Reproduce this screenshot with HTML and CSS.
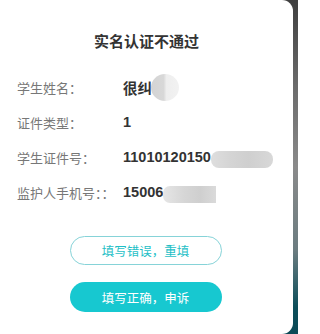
FILE: index.html
```html
<!DOCTYPE html>
<html lang="zh">
<head>
<meta charset="utf-8">
<link rel="stylesheet" href="styles.css">
</head>
<body>
<div class="stage">
  <div class="card">
    <h1 class="title">实名认证不通过</h1>
    <div class="rows">
      <div class="row"><span class="label">学生姓名：</span><span class="value">很纠</span><span class="blur blur-round"></span></div>
      <div class="row"><span class="label">证件类型：</span><span class="value">1</span></div>
      <div class="row"><span class="label">学生证件号：</span><span class="value">11010120150</span><span class="blur blur-id"></span></div>
      <div class="row"><span class="label label-tight">监护人手机号：：</span><span class="value">15006</span><span class="blur blur-phone"></span></div>
    </div>
    <div class="actions">
      <button class="btn btn-outline">填写错误，重填</button>
      <button class="btn btn-fill">填写正确，申诉</button>
    </div>
  </div>
  <div class="backdrop"></div>
</div>
</body>
</html>
```
FILE: styles.css
```css
html, body {
  margin: 0;
  padding: 0;
}
body {
  width: 298px;
  height: 334px;
  overflow: hidden;
  font-family: "Noto Sans CJK SC", "Noto Sans", "Liberation Sans", sans-serif;
  background: #ffffff;
}
.stage {
  display: flex;
  width: 298px;
  height: 334px;
}
.card {
  width: 293px;
  height: 334px;
  background: #ffffff;
  border-radius: 11px;
  display: flex;
  flex-direction: column;
  box-sizing: border-box;
  padding-top: 30px;
}
.backdrop {
  flex: 1;
  margin-left: -12px;
  z-index: -1;
  background: linear-gradient(#3e3e3e 0%, #6a6a6a 25%, #8a8a8a 50%, #6b7c80 75%, #0c4e5a 92%, #0b4a56 100%);
}
.title {
  margin: 0;
  text-align: center;
  font-size: 15px;
  line-height: 22px;
  font-weight: 700;
  color: #333333;
}
.rows {
  display: flex;
  flex-direction: column;
  gap: 15px;
  margin-top: 25px;
  padding-left: 17px;
}
.row {
  display: flex;
  align-items: center;
  height: 20px;
}
.label {
  width: 106px;
  font-size: 13px;
  color: #777777;
  flex: none;
}
.label-tight {
  letter-spacing: 0;
}
.value {
  font-family: "Liberation Sans", "Noto Sans CJK SC", sans-serif;
  font-size: 14.5px;
  font-weight: 700;
  color: #333333;
}
.blur {
  flex: none;
  display: block;
}
.blur-round {
  width: 28px;
  height: 27px;
  border-radius: 50%;
  margin-left: -1px;
  margin-top: 1px;
  background: linear-gradient(90deg, #d4d4d4 0%, #d8d8d8 45%, #eeeeee 55%, #f2f2f2 100%);
}
.blur-id {
  width: 62px;
  height: 17px;
  border-radius: 8px;
  margin-top: 4px;
  background: linear-gradient(90deg, #dedede 0%, #d5d5d5 30%, #cfcfcf 60%, #d8d8d8 100%);
}
.blur-phone {
  width: 53px;
  height: 17px;
  border-radius: 7px 0 0 7px;
  margin-top: 4px;
  background: linear-gradient(90deg, #e6e6e6 0%, #d6d6d6 40%, #cfcfcf 70%, #dadada 100%);
}
.actions {
  display: flex;
  flex-direction: column;
  align-items: center;
  gap: 17px;
  margin-top: 34px;
  padding-right: 2px;
}
.btn {
  width: 152px;
  height: 30px;
  border-radius: 15px;
  font-family: "Noto Sans CJK SC", sans-serif;
  font-size: 12.5px;
  box-sizing: border-box;
  padding: 0;
  cursor: pointer;
}
.btn-outline {
  background: #ffffff;
  border: 1px solid #86d3d8;
  color: #1fbfc7;
  height: 29px;
}
.btn-fill {
  background: #17c8d0;
  border: none;
  color: #ffffff;
}
```
